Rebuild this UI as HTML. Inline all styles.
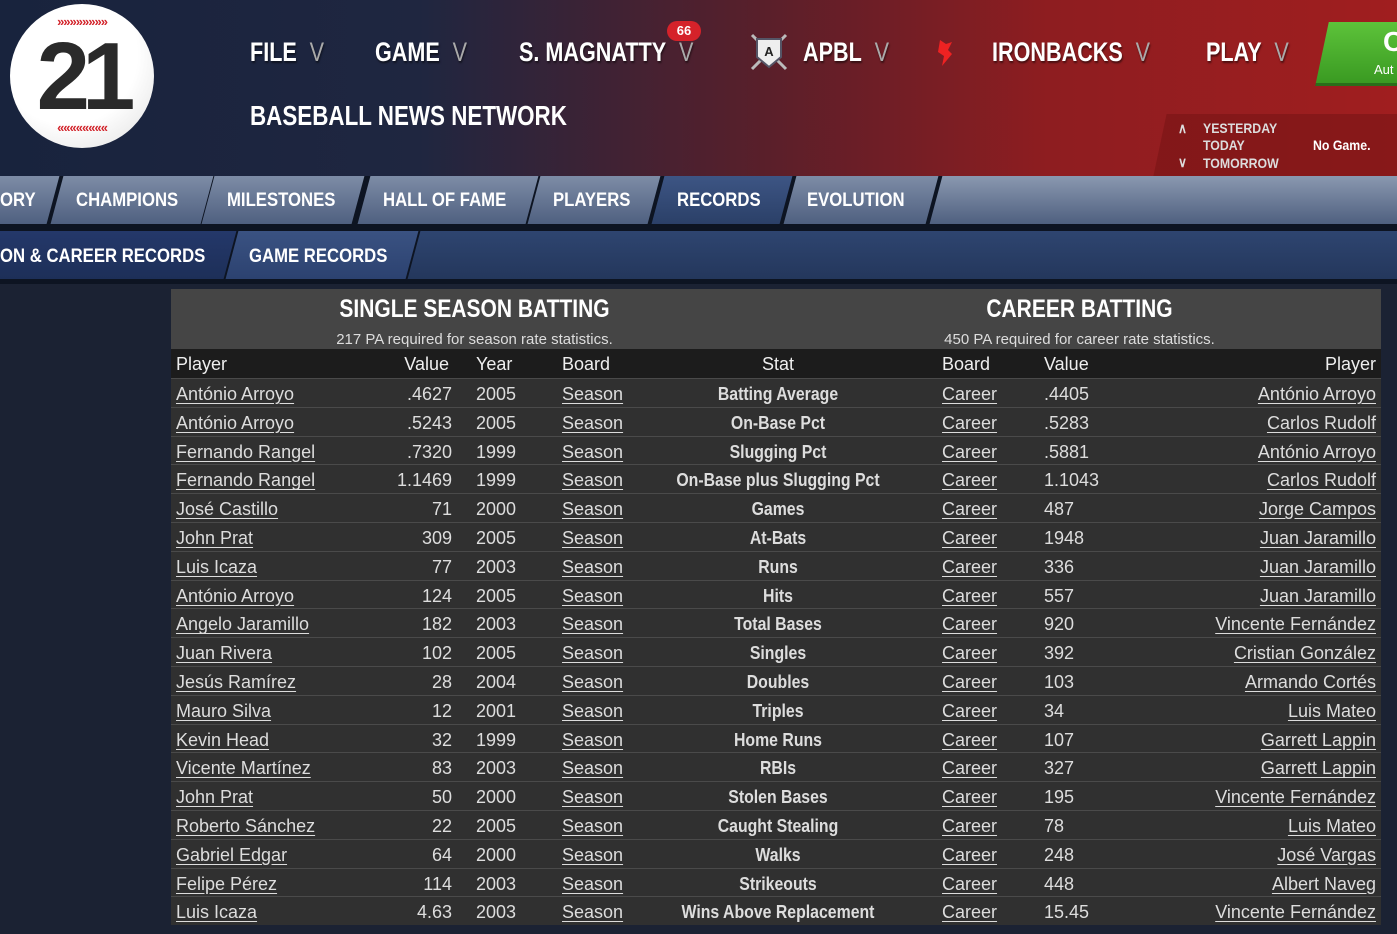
<!DOCTYPE html>
<html><head><meta charset="utf-8"><style>
*{margin:0;padding:0;box-sizing:border-box}
body{width:1397px;height:934px;overflow:hidden;background:#1b2233;font-family:"Liberation Sans",sans-serif;color:#ddd;position:relative}
.hdr{position:absolute;left:0;top:0;width:1397px;height:176px;background:linear-gradient(90deg,#18233d 0%,#1f2640 30%,#5a1f2a 55%,#8e1d20 75%,#a01e1f 100%)}
.ball{position:absolute;left:10px;top:4px;width:144px;height:144px;border-radius:50%;background:radial-gradient(circle at 40% 35%,#fff 55%,#ddd 100%);overflow:hidden}
.ball .n{position:absolute;left:0;width:144px;top:18px;text-align:center;font:bold 96px "Liberation Sans",sans-serif;color:#2a2a2a;letter-spacing:-8px}
.ball .s{position:absolute;left:30px;width:84px;color:#d2232a;font:bold 13px "Liberation Sans",sans-serif;letter-spacing:-1px;text-align:center}
.m{position:absolute;top:37px;font:bold 27px "Liberation Sans",sans-serif;color:#fff;text-shadow:1px 2px 2px rgba(0,0,0,.5);transform:scaleX(.8);transform-origin:left;white-space:nowrap}
.m i{font-style:normal;color:#aaa;font-weight:normal;margin-left:16px}
.bnn{position:absolute;left:250px;top:100px;font:bold 28px "Liberation Sans",sans-serif;color:#fff;transform:scaleX(.8);transform-origin:left;white-space:nowrap}
.badge{position:absolute;left:667px;top:21px;width:34px;height:20px;border-radius:10px;background:#d5222a;color:#fff;font:bold 13px "Liberation Sans",sans-serif;text-align:center;line-height:20px}
.green{position:absolute;left:1322px;top:22px;width:90px;height:64px;background:linear-gradient(#5dc33a,#3a9a22);transform:skewX(-12deg);border-bottom:3px solid #2a6e1a}
.day{position:absolute;left:1160px;top:114px;width:250px;height:62px;background:rgba(120,20,22,.6);transform:skewX(-12deg)}
.dt{position:absolute;font:bold 14px "Liberation Sans",sans-serif;color:#ddd;transform:scaleX(.88);transform-origin:left;white-space:nowrap}
.nav1{position:absolute;left:0;top:176px;width:1397px;height:50px;background:#0d1422}
.tab{position:absolute;height:48px;top:0;transform:skewX(-15deg);background:linear-gradient(#7d8ca6,#4f6080);}
.tl{position:absolute;font:bold 19px "Liberation Sans",sans-serif;color:#fff;top:14px;transform:scaleX(.88);transform-origin:left;white-space:nowrap}
.nav2{position:absolute;left:0;top:226px;width:1397px;height:58px;background:#0d1422}
.t2{position:absolute;top:5px;height:48px;transform:skewX(-15deg);background:linear-gradient(#2e4570,#24375c)}
.tbl{position:absolute;left:171px;top:289px;width:1210px;background:#303030}
.th{height:60px;background:#454545;position:relative}
.th .a,.th .b{position:absolute;text-align:center;color:#fff;font:bold 25px "Liberation Sans",sans-serif;top:6px;transform:scaleX(.84)}
.th .sa,.th .sb{position:absolute;text-align:center;color:#ddd;font-size:15px;top:42px}
.r{height:28.8px;position:relative;border-top:1.5px solid #4a4a4a;font-size:18px;color:#ddd}
.ch{height:29px;background:#1c1c1c;position:relative;font-size:18px;color:#eee}
.r span,.ch span{position:absolute;top:5px;white-space:nowrap}
.r u{text-decoration:underline;text-underline-offset:3px}
.c1{left:5px}.c3{left:305px}.c4{left:391px}.c5{left:407px;width:400px;text-align:center}.c6{left:771px}.c7{left:873px}.c8{right:5px}
.r .c5{font-weight:bold;transform:scaleX(.88)}
</style></head><body>
<div class="hdr"></div>
<div class="ball"><div class="s" style="top:10px">»»»»»»»»</div><div class="n">21</div><div class="s" style="top:116px">««««««««</div></div>
<div class="m" style="left:250px">FILE<i>V</i></div>
<div class="m" style="left:375px">GAME<i>V</i></div>
<div class="m" style="left:519px">S. MAGNATTY<i>V</i></div>
<div class="badge">66</div>
<svg style="position:absolute;left:748px;top:31px" width="42" height="42" viewBox="0 0 42 42"><path d="M4 4L38 38M38 4L4 38" stroke="#bbb" stroke-width="3"/><path d="M9 8h24v18l-12 10-12-10z" fill="#eee" stroke="#556" stroke-width="2"/><text x="21" y="25" text-anchor="middle" font-family="Liberation Sans" font-weight="bold" font-size="13" fill="#222">A</text></svg>
<div class="m" style="left:803px">APBL<i>V</i></div>
<svg style="position:absolute;left:932px;top:38px" width="24" height="30"><path d="M8 2l6 4 6-2-4 8 4 4-10 12 2-10-6-4z" fill="#e22"/></svg>
<div class="m" style="left:992px">IRONBACKS<i>V</i></div>
<div class="m" style="left:1206px">PLAY<i>V</i></div>
<div class="green"></div>
<div style="position:absolute;left:1383px;top:26px;font:bold 28px 'Liberation Sans';color:#fff">C</div>
<div style="position:absolute;left:1374px;top:62px;font:13px 'Liberation Sans';color:#fff">Aut</div>
<div class="bnn">BASEBALL NEWS NETWORK</div>
<div class="day"></div>
<div class="dt" style="left:1178px;top:120px">∧</div>
<div class="dt" style="left:1178px;top:154px">∨</div>
<div class="dt" style="left:1203px;top:120px">YESTERDAY</div>
<div class="dt" style="left:1203px;top:137px">TODAY</div>
<div class="dt" style="left:1203px;top:155px">TOMORROW</div>
<div class="dt" style="left:1313px;top:137px;color:#fff">No Game.</div>

<div class="nav1">
<div class="tab" style="left:-20px;width:73px"></div>
<div class="tab" style="left:57px;width:150px"></div>
<div class="tab" style="left:208px;width:150px"></div>
<div class="tab" style="left:364px;width:168px"></div>
<div class="tab" style="left:534px;width:120px"></div>
<div class="tab" style="left:658px;width:128px;background:linear-gradient(#3d5584,#2b4068)"></div>
<div class="tab" style="left:790px;width:142px"></div>
<div class="tab" style="left:936px;width:480px;background:linear-gradient(#8a98b0,#4f6080)"></div>
<div class="tl" style="left:0">ORY</div>
<div class="tl" style="left:76px">CHAMPIONS</div>
<div class="tl" style="left:227px">MILESTONES</div>
<div class="tl" style="left:383px">HALL OF FAME</div>
<div class="tl" style="left:553px">PLAYERS</div>
<div class="tl" style="left:677px">RECORDS</div>
<div class="tl" style="left:807px">EVOLUTION</div>
</div>
<div class="nav2">
<div class="t2" style="left:-20px;width:250px;background:linear-gradient(#24386a,#1d2f58)"></div>
<div class="t2" style="left:232px;width:180px;background:linear-gradient(#3a5282,#2c4270)"></div>
<div class="t2" style="left:414px;width:1000px"></div>
<div class="tl" style="left:0;top:20px">ON &amp; CAREER RECORDS</div>
<div class="tl" style="left:249px;top:20px">GAME RECORDS</div>
</div>

<div class="tbl">
<div class="th"><div class="a" style="left:0;width:607px">SINGLE SEASON BATTING</div><div class="sa" style="left:0;width:607px">217 PA required for season rate statistics.</div>
<div class="b" style="left:607px;width:603px">CAREER BATTING</div><div class="sb" style="left:607px;width:603px">450 PA required for career rate statistics.</div></div>
<div class="ch"><span class="c1">Player</span><span style="right:932px">Value</span><span class="c3">Year</span><span class="c4">Board</span><span class="c5">Stat</span><span class="c6">Board</span><span class="c7">Value</span><span class="c8">Player</span></div>
<div id="rows"></div>
</div>
<script>
const d=[["António Arroyo",".4627","2005","Batting Average",".4405","António Arroyo"],
["António Arroyo",".5243","2005","On-Base Pct",".5283","Carlos Rudolf"],
["Fernando Rangel",".7320","1999","Slugging Pct",".5881","António Arroyo"],
["Fernando Rangel","1.1469","1999","On-Base plus Slugging Pct","1.1043","Carlos Rudolf"],
["José Castillo","71","2000","Games","487","Jorge Campos"],
["John Prat","309","2005","At-Bats","1948","Juan Jaramillo"],
["Luis Icaza","77","2003","Runs","336","Juan Jaramillo"],
["António Arroyo","124","2005","Hits","557","Juan Jaramillo"],
["Angelo Jaramillo","182","2003","Total Bases","920","Vincente Fernández"],
["Juan Rivera","102","2005","Singles","392","Cristian González"],
["Jesús Ramírez","28","2004","Doubles","103","Armando Cortés"],
["Mauro Silva","12","2001","Triples","34","Luis Mateo"],
["Kevin Head","32","1999","Home Runs","107","Garrett Lappin"],
["Vicente Martínez","83","2003","RBIs","327","Garrett Lappin"],
["John Prat","50","2000","Stolen Bases","195","Vincente Fernández"],
["Roberto Sánchez","22","2005","Caught Stealing","78","Luis Mateo"],
["Gabriel Edgar","64","2000","Walks","248","José Vargas"],
["Felipe Pérez","114","2003","Strikeouts","448","Albert Naveg"],
["Luis Icaza","4.63","2003","Wins Above Replacement","15.45","Vincente Fernández"]];
let h="";for(const r of d){h+=`<div class="r"><span class="c1"><u>${r[0]}</u></span><span style="right:929px">${r[1]}</span><span class="c3">${r[2]}</span><span class="c4"><u>Season</u></span><span class="c5">${r[3]}</span><span class="c6"><u>Career</u></span><span class="c7">${r[4]}</span><span class="c8"><u>${r[5]}</u></span></div>`}
document.getElementById("rows").innerHTML=h;
</script>
</body></html>
